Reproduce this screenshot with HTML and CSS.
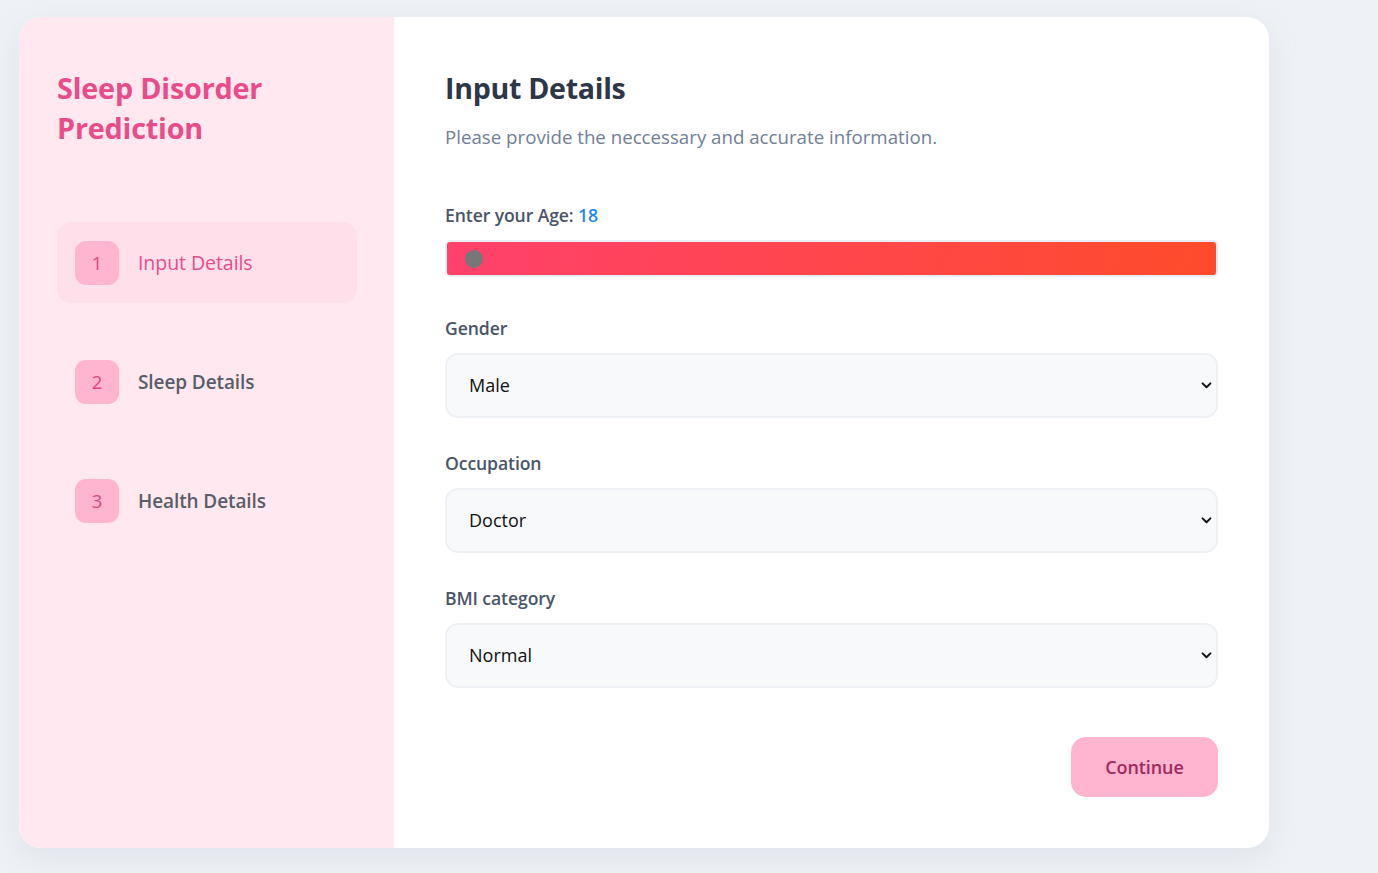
FILE: index.html
```html
<!DOCTYPE html>
<html lang="en">
<head>
<meta charset="utf-8">
<title>Sleep Disorder Prediction</title>
<link rel="stylesheet" href="styles.css">
</head>
<body>
<div class="card">
  <aside class="sidebar">
    <h1 class="brand">Sleep Disorder<br>Prediction</h1>
    <ul class="steps">
      <li class="step active"><span class="badge">1</span><span class="step-label">Input Details</span></li>
      <li class="step"><span class="badge">2</span><span class="step-label">Sleep Details</span></li>
      <li class="step"><span class="badge">3</span><span class="step-label">Health Details</span></li>
    </ul>
  </aside>
  <main class="content">
    <h2 class="title">Input Details</h2>
    <p class="subtitle">Please provide the neccessary and accurate information.</p>

    <div class="field field-age">
      <label class="label">Enter your Age: <span class="age-value">18</span></label>
      <input class="range" type="range" min="18" max="100" value="18">
    </div>

    <div class="field">
      <label class="label">Gender</label>
      <select class="select"><option>Male</option><option>Female</option></select>
    </div>

    <div class="field">
      <label class="label">Occupation</label>
      <select class="select"><option>Doctor</option><option>Engineer</option></select>
    </div>

    <div class="field">
      <label class="label">BMI category</label>
      <select class="select"><option>Normal</option><option>Overweight</option></select>
    </div>

    <div class="actions">
      <button class="btn" type="button">Continue</button>
    </div>
  </main>
</div>
</body>
</html>
```

FILE: styles.css
```css
* { box-sizing: border-box; }

html, body {
  margin: 0;
  padding: 0;
}

body {
  background: #eef1f6;
  font-family: "Open Sans", "Noto Sans", sans-serif;
  padding: 17px 19px;
  min-height: 873px;
}

.card {
  width: 1250px;
  height: 831px;
  display: flex;
  background: #ffffff;
  border-radius: 22px;
  overflow: hidden;
  box-shadow: 0 10px 30px rgba(160, 170, 190, 0.18);
}

.sidebar {
  width: 375px;
  flex: 0 0 375px;
  background: #ffe8ef;
  padding: 51px 37px 0 38px;
}

.brand {
  margin: 0;
  font-size: 28.8px;
  line-height: 40px;
  font-weight: 700;
  color: #e84d8a;
  letter-spacing: -0.2px;
}

.steps {
  list-style: none;
  margin: 74px 0 0;
  padding: 0;
  display: flex;
  flex-direction: column;
  gap: 38px;
}

.step {
  display: flex;
  align-items: center;
  gap: 19px;
  height: 81px;
  padding: 0 18px;
  border-radius: 14px;
}

.step.active {
  background: #ffdfea;
}

.badge {
  width: 44px;
  height: 44px;
  flex: 0 0 44px;
  border-radius: 11px;
  background: #ffb5d0;
  color: #e0467f;
  display: flex;
  align-items: center;
  justify-content: center;
  font-size: 18.5px;
  font-weight: 500;
}

.step-label {
  font-size: 19px;
  font-weight: 600;
  color: #5b5d66;
  letter-spacing: -0.1px;
}

.step.active .step-label {
  color: #e84d8a;
  font-weight: 500;
  font-size: 19.6px;
}

.content {
  flex: 1;
  padding: 51px 51px 0 51px;
  display: flex;
  flex-direction: column;
}

.title {
  margin: 0;
  font-size: 28.6px;
  line-height: 40px;
  font-weight: 700;
  color: #2d3748;
  letter-spacing: -0.3px;
}

.subtitle {
  margin: 16px 0 0;
  font-size: 18.7px;
  line-height: 26px;
  color: #718096;
}

.field {
  display: flex;
  flex-direction: column;
  margin-top: 33px;
}

.subtitle + .field {
  margin-top: 53px;
}

.field-age + .field {
  margin-top: 38.5px;
}

.label {
  font-size: 17.6px;
  line-height: 24px;
  font-weight: 600;
  color: #4a5568;
  margin-bottom: 13px;
  letter-spacing: -0.1px;
}

.age-value {
  color: #1f88f0;
}

.range {
  -webkit-appearance: none;
  appearance: none;
  display: block;
  width: 100%;
  height: 37px;
  margin: 0;
  border-radius: 5px;
  border: 2px solid #e9eef5;
  background: linear-gradient(100deg, #ff416c 0%, #ff4b2b 100%);
  outline: none;
  padding: 0 19px;
}

.range::-webkit-slider-thumb {
  -webkit-appearance: none;
  appearance: none;
  width: 18px;
  height: 18px;
  border-radius: 50%;
  background: #777777;
  border: none;
  margin-left: -1px;
}

.select {
  -webkit-appearance: none;
  appearance: none;
  display: block;
  width: 100%;
  height: 65px;
  padding: 0 40px 0 22px;
  font-family: "Open Sans", "Noto Sans", sans-serif;
  font-size: 18px;
  color: #111111;
  background-color: #f7f9fb;
  background-image: url("data:image/svg+xml;utf8,<svg xmlns='http://www.w3.org/2000/svg' width='12' height='8' viewBox='0 0 12 8'><path d='M1.5 1.5 L6 6 L10.5 1.5' fill='none' stroke='%23111' stroke-width='2.2' stroke-linecap='round' stroke-linejoin='round'/></svg>");
  background-repeat: no-repeat;
  background-position: right 4px center;
  background-size: 11px 7px;
  border: 2px solid #edf1f6;
  border-radius: 13px;
  outline: none;
}

.actions {
  display: flex;
  justify-content: flex-end;
  margin-top: 49px;
}

.btn {
  width: 147px;
  height: 60px;
  border: none;
  border-radius: 15px;
  background: #ffb5d0;
  color: #9f2a5c;
  font-family: "Open Sans", "Noto Sans", sans-serif;
  font-size: 18px;
  font-weight: 600;
  letter-spacing: -0.1px;
  cursor: pointer;
}
```
